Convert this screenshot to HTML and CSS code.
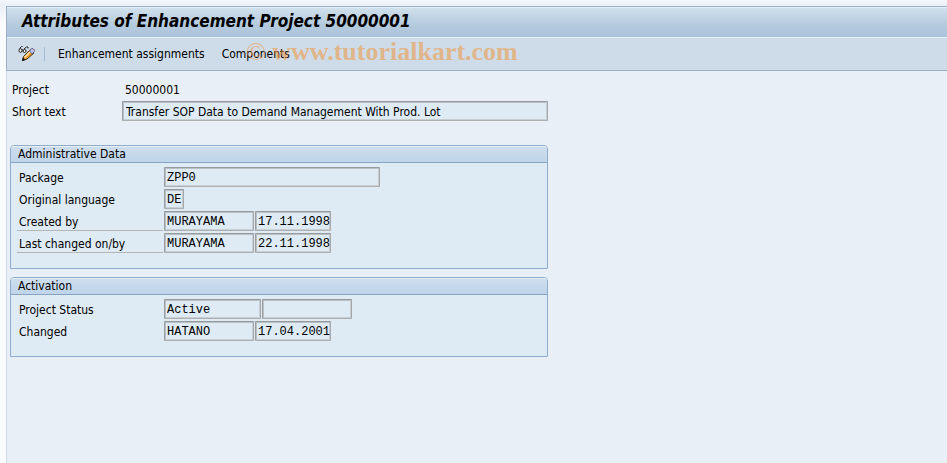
FILE: index.html
```
<!DOCTYPE html>
<html lang="en">
  <head>
    <meta charset="utf-8">
    <title>Attributes of Enhancement Project 50000001</title>
    <link rel="stylesheet" href="styles.css">
  </head>
  <body>
    <div class="window">
      <header class="header">
        <h1 class="title">Attributes of Enhancement Project 50000001</h1>
        <div class="toolbar">
          <button class="icon-button" type="button" aria-label="Display / Change">
            <svg width="18" height="16" viewBox="0 0 18 16">
              <path d="M4.500 14.500l1-4 7-7 3.500 3.500-7 6z" fill="#f39a24" stroke="#4a2c10" />
              <path d="M6.500 11.500l6-6" stroke="#ffe9b8" stroke-width="1.500" />
              <path d="M11.500 5l2-2.500h1.500l1.500 1.500v1.500l-2.500 2.500z" fill="#b4c3f2" stroke="#55557c" stroke-width=".8" />
              <path d="M15 3l1.500 1.500" stroke="#d86450" />
              <path d="M4 15l1-3.500 2.500 2.500z" fill="#111" />
              <g fill="#fff" stroke="#111">
                <ellipse cx="2.500" cy="4.500" rx="1.500" ry="1.800" />
                <ellipse cx="6.500" cy="5" rx="1.500" ry="1.500" />
              </g>
              <path d="M1.500 2.500l2-2h1M6 3l2.500-2h1.500v1.500M4 4h1" fill="none" stroke="#111" stroke-width=".9" />
            </svg>
          </button>
          <span class="separator"></span>
          <button class="text-button" type="button">Enhancement assignments</button>
          <button class="text-button" type="button">Components</button>
          <div class="watermark"><span class="copyright">©</span> www.tutorialkart.com</div>
        </div>
      </header>

      <main class="content">
        <div class="row">
          <span class="head-label">Project</span>
          <span class="value">50000001</span>
        </div>
        <div class="row">
          <label class="head-label" for="shortText">Short text</label>
          <input class="field short-text" id="shortText" value="Transfer SOP Data to Demand Management With Prod. Lot" readonly>
        </div>

        <section class="group">
          <h2 class="group-title">Administrative Data</h2>
          <div class="group-body">
            <div class="row">
              <label class="label" for="package">Package</label>
              <input class="field package" id="package" value="ZPP0" readonly>
            </div>
            <div class="row">
              <label class="label" for="language">Original language</label>
              <input class="field language" id="language" value="DE" readonly>
            </div>
            <div class="row">
              <label class="label underlined" for="createdBy">Created by</label>
              <input class="field user" id="createdBy" value="MURAYAMA" readonly>
              <input class="field date" aria-label="Created on" value="17.11.1998" readonly>
            </div>
            <div class="row">
              <label class="label underlined" for="changedBy">Last changed on/by</label>
              <input class="field user" id="changedBy" value="MURAYAMA" readonly>
              <input class="field date" aria-label="Last changed on" value="22.11.1998" readonly>
            </div>
          </div>
        </section>

        <section class="group activation">
          <h2 class="group-title">Activation</h2>
          <div class="group-body">
            <div class="row">
              <label class="label" for="status">Project Status</label>
              <input class="field status" id="status" value="Active" readonly>
              <input class="field user" aria-label="Status addition" value="" readonly>
            </div>
            <div class="row">
              <label class="label" for="activatedBy">Changed</label>
              <input class="field user" id="activatedBy" value="HATANO" readonly>
              <input class="field date" aria-label="Changed on" value="17.04.2001" readonly>
            </div>
          </div>
        </section>
      </main>
    </div>
  </body>
</html>
```

FILE: styles.css
```
* {
  box-sizing: border-box;
}
body {
  margin: 0;
  padding: 6px 0 0 6px;
  min-height: 100vh;
  display: flex;
  background: linear-gradient(#f3f6fb, #eaf0f8 6px, #fafbfd 24px);
  font-family: "DejaVu Sans Condensed", "DejaVu Sans", Tahoma, sans-serif;
  font-size: 12px;
  color: #000;
}
.window {
  flex: 1;
  background: #e8eff7;
  border-left: 1px solid #d0dae6;
}
.header {
  border: 1px solid #9cb0c5;
  border-width: 1px 0 1px 1px;
  margin-left: -1px;
}
.title {
  margin: 0;
  height: 31px;
  padding: 0 15px;
  border-top: 1px solid #e4eef6;
  border-bottom: 1px solid #e8f0f8;
  background: linear-gradient(#d0e0ec, #b4cadd 60%, #abc3dd);
  font-size: 17px;
  font-style: italic;
  line-height: 26px;
}
.toolbar {
  position: relative;
  display: flex;
  align-items: center;
  height: 32px;
  padding-left: 11px;
  background: #cddce8;
}
.icon-button,
.text-button {
  padding: 0;
  border: 0;
  background: none;
  font: inherit;
  color: inherit;
}
.icon-button svg {
  display: block;
}
.separator {
  width: 1px;
  height: 14px;
  margin: 0 13px 0 8px;
  background: #a3bbd6;
}
.text-button {
  margin-right: 17px;
}
.watermark {
  position: absolute;
  left: 239px;
  top: 0;
  color: rgba(240, 155, 75, 0.6);
  font: bold 26px/28px "Liberation Serif", serif;
  pointer-events: none;
}
.copyright {
  font-weight: normal;
}
.content {
  padding: 8px 3px;
}
.row {
  display: flex;
  gap: 1px;
  height: 22px;
  line-height: 22px;
}
.head-label {
  width: 111px;
  padding-left: 2px;
}
.value {
  padding-left: 3px;
}
.field {
  height: 20px;
  padding: 2px 0 0 2px;
  border: 1px solid;
  border-color: #97999b #a5a7a9 #adafb1 #9b9da0;
  border-radius: 1px;
  background: #deebf5;
  box-shadow: inset 1px 1px 0 #b9c1c7, inset -1px -1px 0 #c8cfd4;
  font: 12px "Liberation Mono", monospace;
  color: #000;
}
.field:focus {
  outline: 1px solid #e0a83c;
}
.short-text {
  width: 426px;
  padding-left: 3px;
  font-family: inherit;
}
.package {
  width: 216px;
}
.language {
  width: 20px;
}
.user {
  width: 90px;
}
.date {
  width: 76px;
}
.status {
  width: 97px;
}
.group {
  width: 538px;
  max-width: 100%;
  margin-top: 22px;
  border: 1px solid #8eaccb;
  border-radius: 4px 4px 0 0;
  background: #deeaf4;
}
.activation {
  margin-top: 8px;
}
.group-title {
  margin: 0;
  height: 17px;
  padding-left: 7px;
  border-top: 1px solid #e6eff7;
  border-bottom: 1px solid #86a5c6;
  border-radius: 3px 3px 0 0;
  background: linear-gradient(#cddded, #bfd5ea);
  font-size: 12px;
  font-weight: normal;
  line-height: 15px;
}
.group-body {
  padding: 4px 6px 13px;
}
.label {
  width: 146px;
  height: 20px;
  padding-left: 2px;
}
.underlined {
  border-bottom: 1px solid #b3b5b7;
}
```
